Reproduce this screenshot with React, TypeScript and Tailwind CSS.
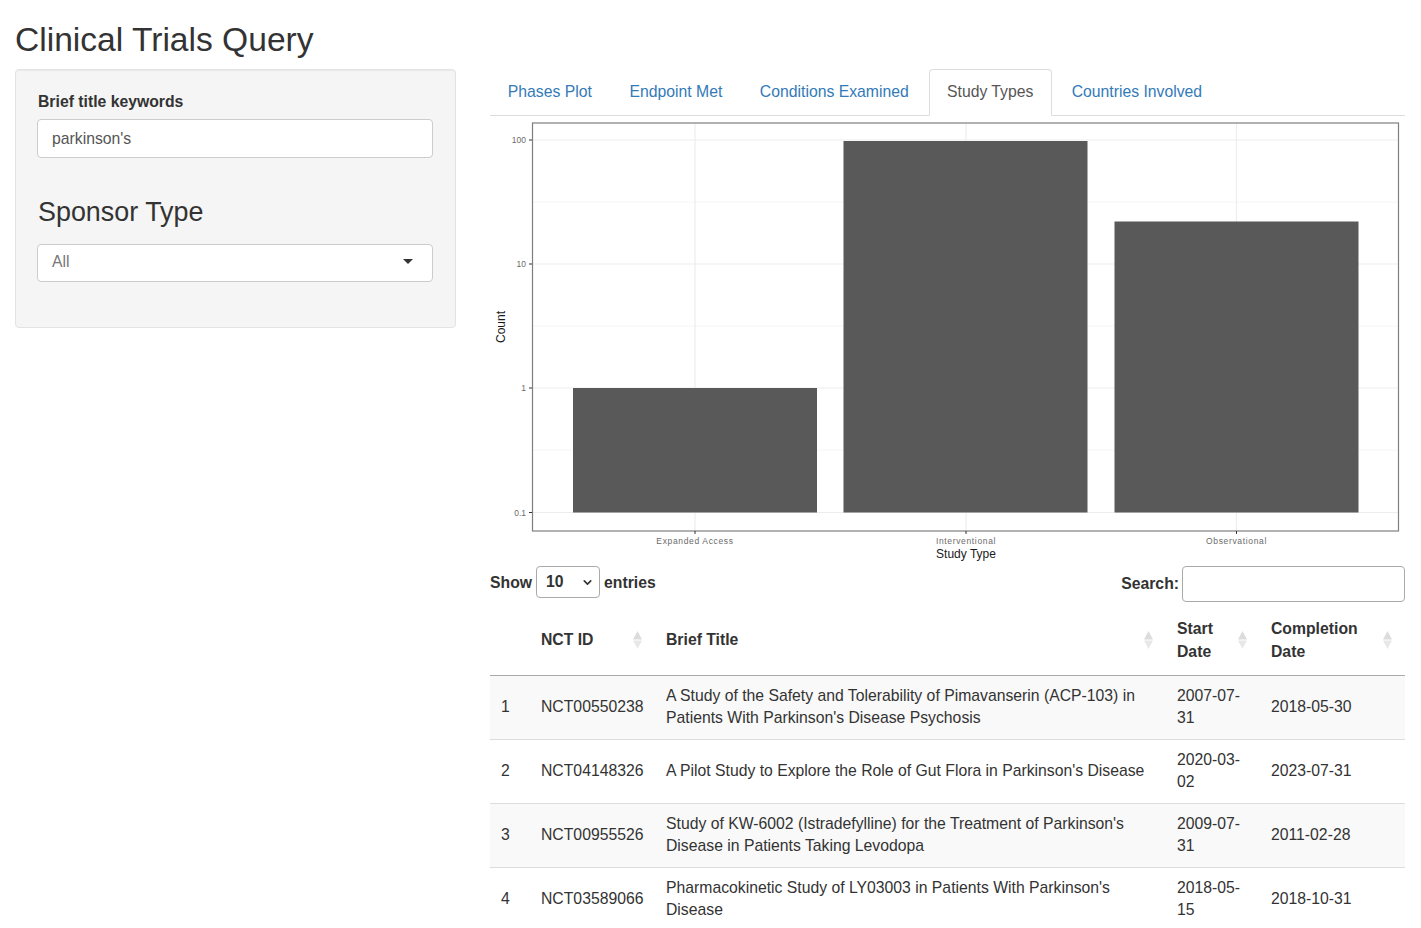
import React from 'react';
import { ChevronDown } from 'lucide-react';

const tabs = ['Phases Plot', 'Endpoint Met', 'Conditions Examined', 'Study Types', 'Countries Involved'];

const rows = [
  { id: 1, nct: 'NCT00550238', title: "A Study of the Safety and Tolerability of Pimavanserin (ACP-103) in Patients With Parkinson's Disease Psychosis", start: '2007-07-31', end: '2018-05-30' },
  { id: 2, nct: 'NCT04148326', title: "A Pilot Study to Explore the Role of Gut Flora in Parkinson's Disease", start: '2020-03-02', end: '2023-07-31' },
  { id: 3, nct: 'NCT00955526', title: "Study of KW-6002 (Istradefylline) for the Treatment of Parkinson's Disease in Patients Taking Levodopa", start: '2009-07-31', end: '2011-02-28' },
  { id: 4, nct: 'NCT03589066', title: "Pharmacokinetic Study of LY03003 in Patients With Parkinson's Disease", start: '2018-05-15', end: '2018-10-31' },
];

const SortIcon = () => (
  <svg width="9" height="18" viewBox="0 0 9 18" className="shrink-0">
    <path d="M4.5 0 L9 8.5 H0 Z" fill="#dcdcdc" />
    <path d="M4.5 18 L9 9.5 H0 Z" fill="#e8e8e8" />
  </svg>
);

const Chart = () => {
  // plot coordinates are relative to the svg origin at (490, 116)
  const yTicks = [
    { label: '100', y: 24 },
    { label: '10', y: 148 },
    { label: '1', y: 272 },
    { label: '0.1', y: 396.5 },
  ];
  const minor = [86, 210, 334];
  const bars = [
    { x: 83, y: 272, w: 244, label: 'Expanded Access', cx: 205 },
    { x: 353.5, y: 25, w: 244, label: 'Interventional', cx: 476 },
    { x: 624.5, y: 105.5, w: 244, label: 'Observational', cx: 746.5 },
  ];
  return (
    <svg width="915" height="450" viewBox="0 0 915 450" className="block" style={{ fontFamily: '"Liberation Sans", Arial, sans-serif' }}>
      <rect x="42.5" y="7" width="866" height="408" fill="#fff" />
      {minor.map((y) => (
        <line key={y} x1="43" x2="908" y1={y} y2={y} stroke="#f6f6f6" strokeWidth="1" />
      ))}
      {yTicks.map((t) => (
        <line key={t.label} x1="43" x2="908" y1={t.y} y2={t.y} stroke="#ededed" strokeWidth="1.2" />
      ))}
      {bars.map((b) => (
        <line key={b.label} x1={b.cx} x2={b.cx} y1="7" y2="415" stroke="#ededed" strokeWidth="1.2" />
      ))}
      {bars.map((b) => (
        <rect key={b.label} x={b.x} y={b.y} width={b.w} height={396.5 - b.y} fill="#595959" />
      ))}
      <rect x="42.5" y="7" width="866" height="408" fill="none" stroke="#7f7f7f" strokeWidth="1.2" />
      {yTicks.map((t) => (
        <g key={t.label}>
          <line x1="39" x2="42" y1={t.y} y2={t.y} stroke="#333" strokeWidth="1" />
          <text x="36" y={t.y + 3} textAnchor="end" fontSize="8.5" fill="#6b6b6b">{t.label}</text>
        </g>
      ))}
      {bars.map((b) => (
        <g key={b.label}>
          <line x1={b.cx} x2={b.cx} y1="415" y2="418" stroke="#333" strokeWidth="1" />
          <text x={b.cx} y="428" textAnchor="middle" fontSize="8.5" letterSpacing="0.65" fill="#6b6b6b">{b.label}</text>
        </g>
      ))}
      <text x="476" y="442" textAnchor="middle" fontSize="12" fill="#1a1a1a">Study Type</text>
      <text transform="translate(15 211) rotate(-90)" textAnchor="middle" fontSize="12" fill="#1a1a1a">Count</text>
    </svg>
  );
};

const App: React.FC = () => {
  return (
    <div className="h-[928px] overflow-hidden bg-white px-[15px] text-[15.75px] leading-[22px] text-[#333] font-['Liberation_Sans',Arial,sans-serif]">
      <h2 className="pt-[20px] pb-[9px] text-[33.6px] leading-[40px] font-normal">Clinical Trials Query</h2>

      <div className="flex items-start">
        <aside className="w-[441px] shrink-0 h-[259px] rounded border border-[#e3e3e3] bg-[#f5f5f5] pl-[22px] pr-[22px] pt-[21px] shadow-[inset_0_1px_1px_rgba(0,0,0,0.05)]">
          <label className="block font-bold mb-[6px]">Brief title keywords</label>
          <div className="-ml-[1px] h-[39px] w-[396px] rounded border border-[#ccc] bg-white px-[14px] flex items-center text-[#555]">parkinson's</div>
          <h3 className="mt-[34px] mb-[12px] text-[26.9px] leading-[40px] font-normal">Sponsor Type</h3>
          <div className="-ml-[1px] relative h-[38px] w-[396px] rounded border border-[#ccc] bg-white px-[14px] pb-[2px] flex items-center text-[#777]">
            All
            <span className="absolute right-[19px] top-[14px] border-x-[5px] border-t-[5px] border-x-transparent border-t-[#333]" />
          </div>
        </aside>

        <main className="ml-[34px] w-[915px] shrink-0">
          <ul className="flex h-[47px] border-b border-[#ddd]">
            {tabs.map((t) =>
              t === 'Study Types' ? (
                <li key={t} className="mr-[2px] h-[47px] rounded-t border border-[#ddd] border-b-white bg-white px-[17.5px] pt-[11px] text-[#555]">{t}</li>
              ) : (
                <li key={t} className="mr-[2px] h-[46px] px-[17.8px] pt-[12px] text-[#337ab7]">{t}</li>
              )
            )}
          </ul>

          <Chart />

          <div className="flex items-start justify-between">
            <div className="flex items-center font-bold">
              <span className="pt-[1px]">Show</span>
              <span className="mx-[4px] flex h-[32px] w-[64px] items-center justify-between rounded border border-[#aaa] pl-[9px] pr-[5px] font-bold">
                10
                <ChevronDown size={13} strokeWidth={3} color="#333" />
              </span>
              <span className="pt-[1px]">entries</span>
            </div>
            <div className="flex items-center font-bold">
              Search:
              <span className="ml-[3px] h-[36px] w-[223px] rounded border border-[#aaa] bg-white" />
            </div>
          </div>

          <table className="mt-[3px] w-[915px] table-fixed border-collapse">
            <colgroup>
              <col className="w-[40px]" />
              <col className="w-[125px]" />
              <col className="w-[511px]" />
              <col className="w-[94px]" />
              <col className="w-[145px]" />
            </colgroup>
            <thead>
              <tr className="h-[70px] border-b border-[#aaa] font-bold leading-[23px]">
                <th />
                {[['NCT ID'], ['Brief Title'], ['Start', 'Date'], ['Completion', 'Date']].map((h) => (
                  <th key={h[0]} className="pl-[11px] pr-[13px] text-left font-bold">
                    <div className="flex items-center justify-between">
                      <span>{h.map((l) => <span key={l} className="block">{l}</span>)}</span>
                      <SortIcon />
                    </div>
                  </th>
                ))}
              </tr>
            </thead>
            <tbody>
              {rows.map((r) => (
                <tr key={r.id} className={`h-[64px] border-b border-[#ddd] ${r.id % 2 === 1 ? 'bg-[#f9f9f9]' : 'bg-white'}`}>
                  <td className="pl-[11px]">{r.id}</td>
                  <td className="pl-[11px]">{r.nct}</td>
                  <td className="pl-[11px] pr-[10px]">{r.title}</td>
                  <td className="pl-[11px] pr-[10px]">{r.start}</td>
                  <td className="pl-[11px]">{r.end}</td>
                </tr>
              ))}
            </tbody>
          </table>
        </main>
      </div>
    </div>
  );
};

export default App;
